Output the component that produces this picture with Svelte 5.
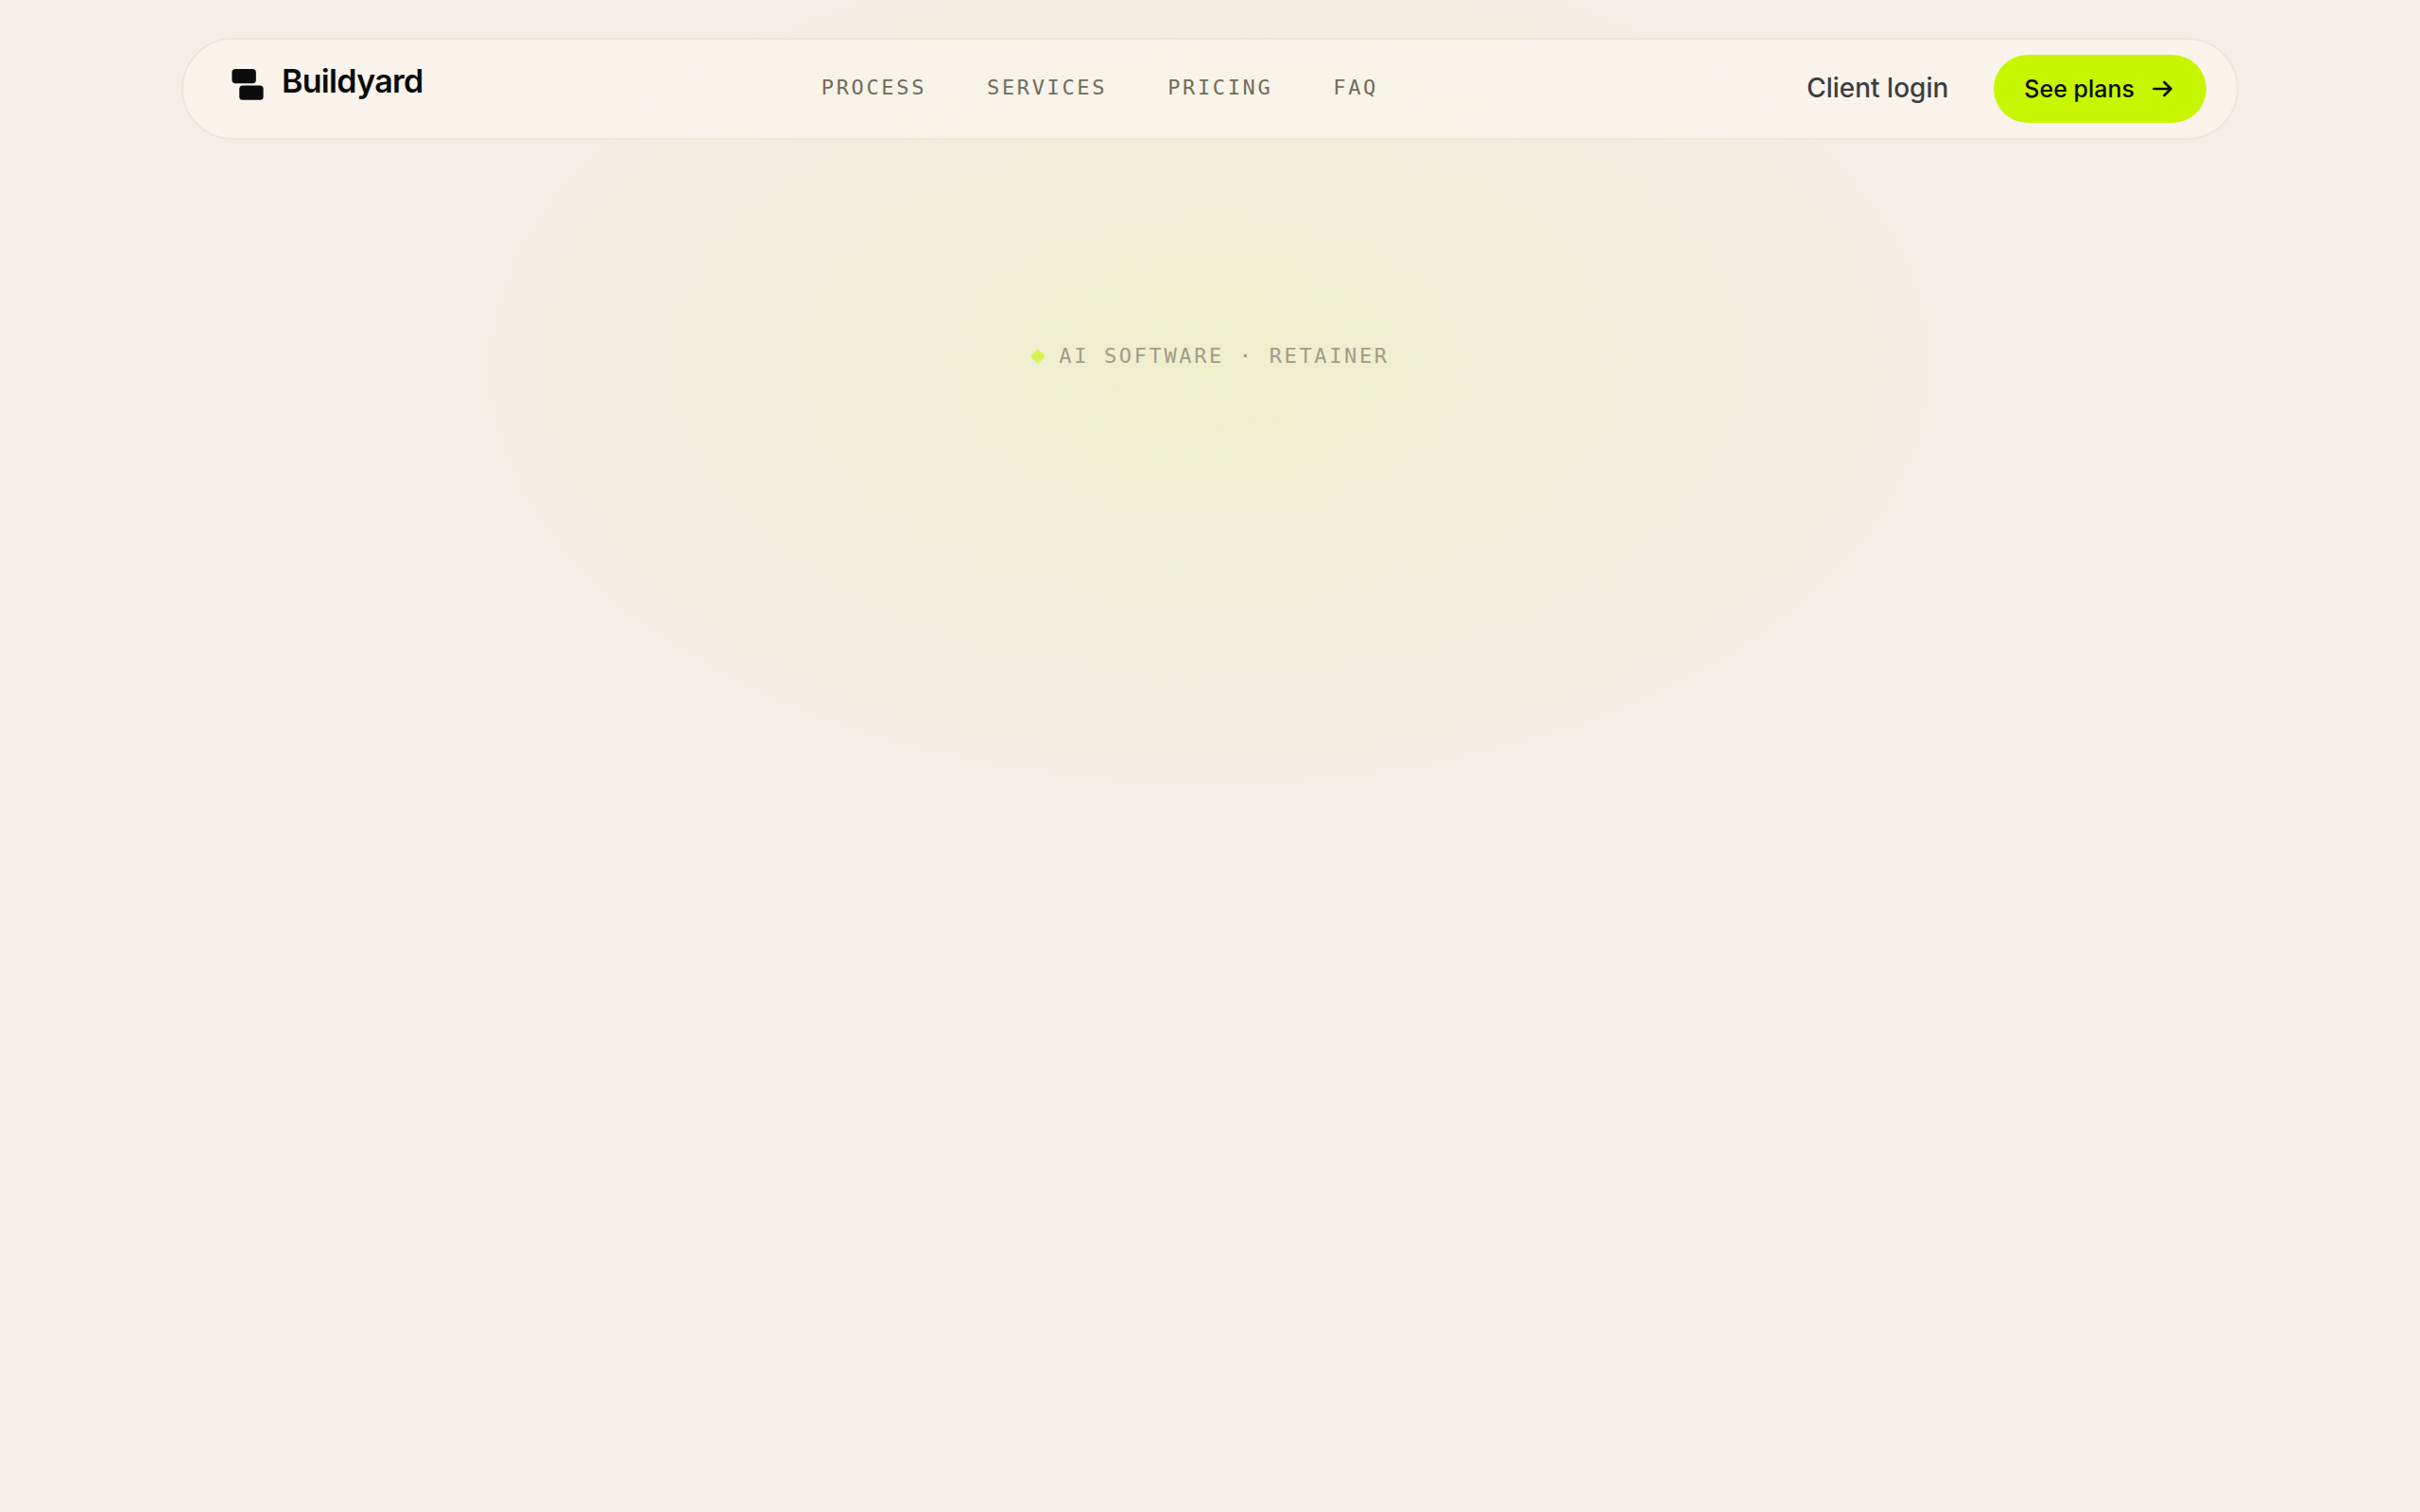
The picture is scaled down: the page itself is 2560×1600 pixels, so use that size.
<script>
    const links = [
        { label: "Process", href: "#process" },
        { label: "Services", href: "#services" },
        { label: "Pricing", href: "#pricing" },
        { label: "FAQ", href: "#faq" },
    ];
</script>

<div class="page">
    <header>
        <a class="brand" href="#top">
            <svg width="34" height="34" viewBox="0 0 34 34" aria-hidden="true">
                <rect x="0.4" y="1" width="25.4" height="15.2" rx="3.6" />
                <rect x="8.2" y="18.6" width="25.4" height="15.2" rx="3.6" />
            </svg>
            <span>Buildyard</span>
        </a>

        <nav aria-label="Main">
            {#each links as link}
                <a href={link.href}>{link.label}</a>
            {/each}
        </nav>

        <div class="actions">
            <a class="login" href="#login">Client login</a>
            <a class="plans" href="#pricing">
                See plans
                <svg width="24" height="24" viewBox="0 0 24 24" aria-hidden="true">
                    <path d="M2.5 12h18M13.5 5l7 7-7 7" />
                </svg>
            </a>
        </div>
    </header>

    <main>
        <p class="eyebrow">
            <svg width="16" height="16" viewBox="0 0 16 16" aria-hidden="true">
                <path d="M8 0l8 8-8 8-8-8z" />
            </svg>
            AI software · Retainer
        </p>
    </main>
</div>

<style>
    :global(body) {
        background: #f3eee7;
    }

    .page {
        box-sizing: border-box;
        min-height: 100vh;
        padding-top: 40px;
        font-family: Inter, "Liberation Sans", sans-serif;
        color: #0b0b0b;
        background: radial-gradient(
            ellipse 780px 452px at 50% 388px,
            rgba(200, 246, 0, 0.12),
            rgba(200, 246, 0, 0.06) 52%,
            rgba(200, 246, 0, 0.016) 94%,
            rgba(200, 246, 0, 0)
        );
    }

    a {
        color: inherit;
        text-decoration: none;
    }

    header {
        box-sizing: border-box;
        display: flex;
        align-items: center;
        justify-content: space-between;
        width: 85%;
        height: 108px;
        margin: 0 auto;
        padding: 0 32px 0 51px;
        border: 2px solid rgba(120, 115, 70, 0.1);
        border-radius: 54px;
        background: rgba(253, 248, 241, 0.55);
    }

    .brand {
        display: flex;
        align-items: flex-end;
        gap: 19px;
        padding-bottom: 16px;
        font-size: 34px;
        font-weight: 600;
        line-height: 40px;
        letter-spacing: -0.02em;
    }

    .brand svg {
        fill: #0b0b0b;
    }

    nav {
        display: flex;
        gap: 64px;
        margin-right: 32px;
    }

    nav a,
    .eyebrow {
        font-family: "DejaVu Sans Mono", monospace;
        font-size: 22px;
        line-height: 32px;
        letter-spacing: 0.12em;
        text-transform: uppercase;
    }

    nav a {
        padding-bottom: 2px;
        color: #706c5c;
    }

    .actions {
        display: flex;
        align-items: center;
        gap: 48px;
    }

    .login {
        padding-bottom: 2px;
        font-size: 28px;
        font-weight: 500;
        color: #3d3d3d;
    }

    .plans {
        display: flex;
        align-items: center;
        gap: 18px;
        height: 72px;
        padding: 0 34px 0 32px;
        border-radius: 36px;
        font-size: 25px;
        font-weight: 500;
        background: #c8f600;
    }

    .plans svg {
        fill: none;
        stroke: #0b0b0b;
        stroke-width: 2.6;
        stroke-linecap: round;
        stroke-linejoin: round;
    }

    main {
        padding-top: 213px;
    }

    .eyebrow {
        display: flex;
        align-items: center;
        justify-content: center;
        gap: 14px;
        margin: 0;
        color: #a09c87;
    }

    .eyebrow svg {
        fill: #d6f355;
    }
</style>
